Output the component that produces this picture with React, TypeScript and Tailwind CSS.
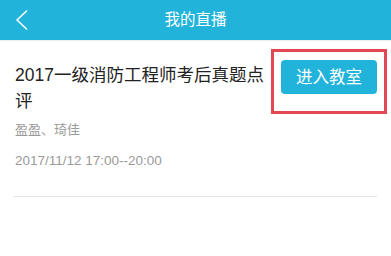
import React from "react";

export default function App() {
  const font = { fontFamily: '"Liberation Sans", "Noto Sans CJK SC", sans-serif' };
  return (
    <div className="w-[391px] h-[256px] bg-white overflow-hidden" style={font}>
      <div className="h-[40px] bg-[#22b3da] relative flex items-center justify-center">
        <svg className="absolute left-[15px] top-[10px]" width="13" height="20" viewBox="0 0 13 20">
          <path d="M11.5 1 L2 10 L11.5 19" fill="none" stroke="white" strokeWidth="1.6" strokeLinecap="round" strokeLinejoin="round" />
        </svg>
        <span className="text-white text-[15.5px] leading-none">我的直播</span>
      </div>
      <div className="h-px bg-[#e6eef0]" />
      <div className="pl-[15px] pr-[14px]">
        <div className="flex items-start pt-[19px]">
          <div className="flex-1 mt-[2px]">
            <div className="text-[17.5px] leading-[26px] text-[#222]">2017一级消防工程师考后真题点评</div>
          </div>
          <div className="relative ml-[11px] shrink-0">
            <div className="w-[96px] h-[34px] rounded-[4px] bg-[#22b3da] flex items-center justify-center text-white text-[16.5px]">
              进入教室
            </div>
            <div className="absolute left-[-10px] right-[-10px] top-[-11px] bottom-[-20px] border-[3px] border-[#e2484f]" />
          </div>
        </div>
        <div className="mt-[7px] text-[13px] leading-[18px] text-[#9a9a9a]">盈盈、琦佳</div>
        <div className="mt-[13px] text-[13.5px] leading-[18px] text-[#9a9a9a]">2017/11/12 17:00--20:00</div>
        <div className="mt-[26px] h-px bg-[#e2e2e2] ml-[-1px]" />
      </div>
    </div>
  );
}
